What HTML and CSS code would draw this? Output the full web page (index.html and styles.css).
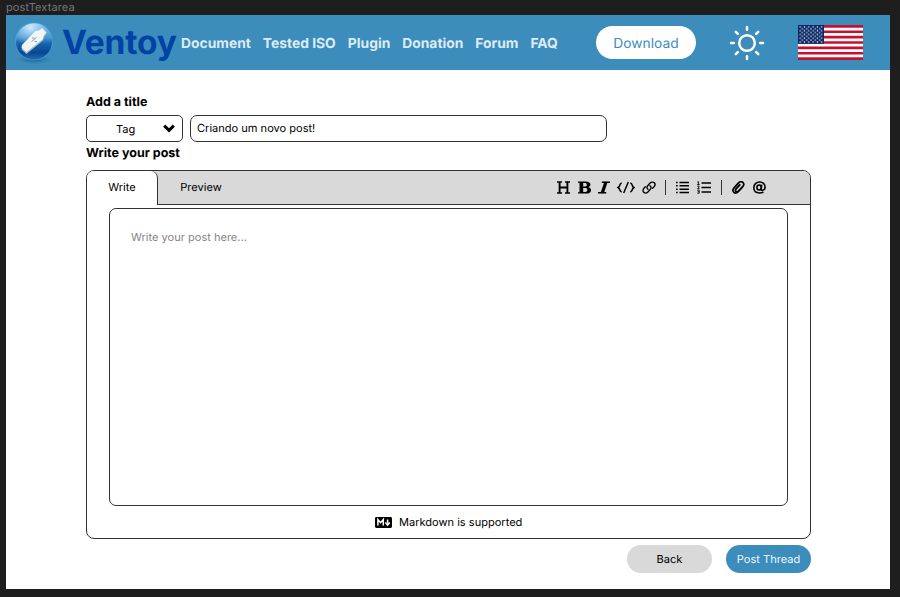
FILE: index.html
```html
<!DOCTYPE html>
<html lang="en">
<head>
<meta charset="utf-8">
<title>postTextarea</title>
<link rel="stylesheet" href="styles.css">
</head>
<body>
<div class="frame-name">postTextarea</div>
<div class="frame">
  <header class="topbar">
    <svg class="logo" viewBox="0 0 40 42">
      <defs>
        <linearGradient id="ball" x1="0" y1="0" x2="0" y2="1"><stop offset="0" stop-color="#8fcbee"/><stop offset=".4" stop-color="#4596d0"/><stop offset=".55" stop-color="#1765b0"/><stop offset=".8" stop-color="#074793"/><stop offset="1" stop-color="#226fb5"/></linearGradient>
        <radialGradient id="gloss" cx=".4" cy=".12" r=".5"><stop offset="0" stop-color="#e2f7ff" stop-opacity=".8"/><stop offset="1" stop-color="#8fcdf0" stop-opacity="0"/></radialGradient>
        <radialGradient id="shade"><stop offset="0" stop-color="#0c4c85" stop-opacity=".9"/><stop offset="1" stop-color="#2f79ab" stop-opacity="0"/></radialGradient>
      </defs>
      <ellipse cx="20" cy="37.500" rx="18" ry="5" fill="url(#shade)"/>
      <circle cx="20" cy="19.5" r="18.5" fill="url(#ball)" stroke="#5da9d6" stroke-width=".6"/>
      <circle cx="20" cy="19.5" r="18" fill="url(#gloss)"/>
      <path d="M7.500 27.500l5 4.500L29 18.500l1-4 2.500-2.500-4.500-5-3 2.500-3.500.5L8 25z" fill="#a9b9c5"/>
      <path d="M7.500 25.500l5 4.500L29 17l1-4 2.500-2.500-4.500-4.500-3 2.500-3.500.5L8 23z" fill="#f3f4f5"/>
      <path d="M17.500 19.500l5-4M18 16h2.500M20.500 19.500h2.500" fill="none" stroke="#7f98a5" stroke-width=".9"/>
    </svg>
    <span class="brand">Ventoy</span>
    <nav class="nav"><a>Document</a><a>Tested ISO</a><a>Plugin</a><a>Donation</a><a>Forum</a><a>FAQ</a></nav>
    <button class="download">Download</button>
    <svg class="sun" viewBox="0 0 36 36" fill="none" stroke="#fff" stroke-width="2.5" stroke-linecap="round"><circle cx="18" cy="18" r="7.800"/><path d="M18 2v2.800M18 31.200V34M2 18h2.800M31.200 18H34M6.800 6.800l2 2M27.200 27.200l2 2M6.800 29.200l2-2M27.200 8.800l2-2"/></svg>
    <svg class="flag" viewBox="0 0 65 35" preserveAspectRatio="none">
      <defs><pattern id="stars" width="4.33" height="3.78" patternUnits="userSpaceOnUse"><circle cx="2.1" cy="1.9" r=".72" fill="#fff"/><circle cx="0" cy="0" r=".72" fill="#fff"/><circle cx="4.33" cy="0" r=".72" fill="#fff"/><circle cx="0" cy="3.78" r=".72" fill="#fff"/><circle cx="4.33" cy="3.78" r=".72" fill="#fff"/></pattern></defs>
      <path fill="#fff" d="M0 0h65v35H0z"/>
      <path stroke="#c8102e" stroke-width="2.692" d="M0 1.350h65M0 6.730h65M0 12.120h65M0 17.500h65M0 22.880h65M0 28.270h65M0 33.650h65"/>
      <path fill="#0a2a66" d="M0 0h26v18.850H0z"/><path fill="url(#stars)" d="M1 1h24v17H1z"/>
    </svg>
  </header>
  <main class="content">
    <h2 class="label">Add a title</h2>
    <div class="title-row">
      <div class="tag"><span>Tag</span><svg viewBox="0 0 12 9"><path d="M1.200 1.600L6 6.400l4.800-4.800" fill="none" stroke="#000" stroke-width="3"/></svg></div>
      <div class="title-input">Criando um novo post!</div>
    </div>
    <h2 class="label second">Write your post</h2>
    <section class="editor">
      <div class="tabs">
        <div class="tab active">Write</div>
        <div class="tab">Preview</div>
        <div class="tools">
          <svg class="t-h" viewBox="0 0 13 13"><path d="M0 1h5M8 1h5M0 12h5M8 12h5" stroke="#000" stroke-width="1.400"/><path d="M2.600 1v11M10.400 1v11M2.600 6.500h7.800" stroke="#000" stroke-width="1.900"/></svg>
          <svg class="t-b" viewBox="0 0 13 13"><path fill="#000" fill-rule="evenodd" d="M0 .4h7.500C11 .4 12.400 1.700 12.400 3.500c0 1.500-.9 2.300-2.200 2.700 1.800.3 2.800 1.300 2.800 3 0 2.200-1.700 3.400-4.800 3.400H0v-1.400h1.500V1.800H0zM5.200 2v3.500h1.600C8.200 5.500 8.800 4.900 8.800 3.700S8.200 2 6.800 2zM5.200 7.100V11H7c1.600 0 2.300-.6 2.300-1.900 0-1.400-.8-2-2.300-2z"/></svg>
          <svg class="t-i" viewBox="0 0 12 13"><path d="M3.800 1.200H12M0 11.800h8.200" stroke="#000" stroke-width="1.500"/><path d="M8 1L4.200 12" stroke="#000" stroke-width="3.200"/></svg>
          <svg class="t-code" viewBox="0 0 18 13"><path d="M4.700 2C1.900 2.600 3.600 5.500 1 6.500c2.600 1 .9 3.900 3.700 4.500M13.300 2c2.800.6 1.100 3.500 3.700 4.500-2.600 1-.9 3.900-3.700 4.500M11.300 1L6.700 12" fill="none" stroke="#000" stroke-width="1.500"/></svg>
          <svg class="t-link" viewBox="0 0 14 13"><g fill="none" stroke="#000" stroke-width="1.350" stroke-linecap="round"><path d="M6 8.300C4 6.500 5.200 5 6.300 3.900l1.800-1.800c1.500-1.500 3.300-1.200 4.200-.3s1 2.700-.3 4L10.600 7.200"/><path d="M8 4.700c2 1.800.8 3.300-.3 4.400L5.900 10.900c-1.500 1.500-3.300 1.200-4.200.3s-1-2.700.3-4L3.400 5.800"/></g></svg>
          <i class="divider"></i>
          <svg class="t-ul" viewBox="0 0 13 13"><path d="M3.500 1.500H13M3.500 4.800H13M3.500 8.200H13M3.500 11.500H13M0 1.500h1.700M0 4.800h1.700M0 8.200h1.700M0 11.500h1.700" stroke="#000" stroke-width="1.600"/></svg>
          <svg class="t-ol" viewBox="0 0 14 13"><path d="M4.500 2H14M4.500 6.500H14M4.500 11H14" stroke="#000" stroke-width="1.500"/><path d="M.4 1l1-.4v3M.2 3.500h2.400M.3 5.200h1.800v1L.5 7.600h2M.3 9.200h1.900v3H.3M.8 10.700h1.400" fill="none" stroke="#000" stroke-width=".9"/></svg>
          <i class="divider"></i>
          <svg class="t-clip" viewBox="0 0 13 13"><path d="M10.800 5.600L6.500 10.400c-1.700 1.900-3.400 2-4.600.9s-1.200-2.900.2-4.500l4-4.500C7.600.7 9.400.2 10.800 1.400s1.300 2.700.1 4L6.700 9.900c-.9 1-1.900 1.200-2.700.5s-.7-1.700.1-2.600l3.700-4" fill="none" stroke="#000" stroke-width="1.750" stroke-linecap="round"/></svg>
          <svg class="t-at" viewBox="0 0 13 13"><g fill="none" stroke="#000" stroke-width="1.600"><ellipse cx="6.100" cy="6.500" rx="2.200" ry="2.500"/><path d="M8.700 3.700L8.200 7.600c-.2 1.600.6 1.800 1.400 1.700 1.500-.2 2.500-1.400 2.500-3.200C12.100 2.900 9.700 1 6.700 1 3.300 1 .8 3.400.8 6.600c0 3.300 2.300 5.400 5.700 5.400 1.600 0 2.900-.4 3.900-1"/></g></svg>
        </div>
      </div>
      <div class="textarea">Write your post here...</div>
      <div class="markdown"><svg viewBox="0 0 17 11"><rect width="17" height="11" rx="1.400"/><path d="M2.900 8.500v-6L5.600 5.700 8.300 2.500v6M12.600 2.400v4M10.400 5.600l2.200 2.600 2.200-2.600" fill="none" stroke="#fff" stroke-width="1.500"/></svg><span>Markdown is supported</span></div>
    </section>
    <div class="actions"><button class="back">Back</button><button class="post">Post Thread</button></div>
  </main>
</div>
</body>
</html>
```
FILE: styles.css
```css
* { box-sizing: border-box; }
body { margin: 0; height: 597px; overflow: hidden; background: #1e1e1e; font-family: Inter, "Liberation Sans", sans-serif; font-size: 11.05px; color: #000; text-rendering: geometricPrecision; }
button { border: 0; padding: 0; font: inherit; text-rendering: inherit; }
svg { display: block; flex: none; }
.frame-name { height: 15px; padding-left: 6px; line-height: 14px; font-size: 11px; letter-spacing: .1px; color: #777; }
.frame { width: 884px; height: 574px; margin-left: 6px; background: #fff; }
.topbar { display: flex; align-items: center; height: 55px; background: #3c8dbc; }
.logo { width: 40px; height: 42px; margin-left: 8px; }
.brand { width: 119px; padding: 2px 0 0 8px; font-size: 33.5px; font-weight: 700; line-height: 53px; letter-spacing: -.2px; color: #0043a5; white-space: nowrap; }
.nav { display: flex; gap: 12px; width: 415px; padding: 2px 0 0 8px; font-size: 13.85px; font-weight: 700; color: #dcebf4; white-space: nowrap; }
.download { width: 100px; height: 33px; margin-left: 8px; padding-top: 2px; border-radius: 17px; background: #fff; color: #3c8dbc; font-size: 13.8px; }
.sun { width: 36px; height: 36px; margin-left: 33px; }
.flag { width: 65px; height: 35px; margin-left: 33px; }
.content { width: 725px; margin-left: 80px; padding-top: 24px; }
.label { margin: 0; height: 21px; line-height: 18px; font-size: 12.5px; font-weight: 700; }
.title-row { display: flex; gap: 7px; height: 27px; }
.tag { display: flex; align-items: center; justify-content: space-between; width: 97px; padding: 0 7px 0 29px; border: 1px solid #333; border-radius: 5px; }
.tag svg { width: 12px; height: 9px; }
.title-input { width: 417px; padding-left: 6px; border: 1px solid #333; border-radius: 7px; line-height: 25px; }
.second { height: 28px; line-height: 24px; }
.editor { height: 369px; border: 1px solid #333; border-radius: 8px; overflow: hidden; }
.tabs { display: flex; height: 34px; background: linear-gradient(#333, #333) 0 100% / 100% 1px no-repeat #d9d9d9; line-height: 33px; }
.tab { width: 86px; text-align: center; }
.active { width: 71px; background: #fff; border-right: 1px solid #333; border-top-right-radius: 7px; }
.tools { display: flex; align-items: center; height: 32px; margin-left: 313px; }
.tools svg { height: 13px; }
.t-h { width: 13px; }
.t-b { width: 13px; margin-left: 8px; }
.t-i { width: 12px; margin-left: 7px; }
.t-code { width: 18px; margin-left: 7px; }
.t-link { width: 14px; margin-left: 7px; }
.divider { width: 1px; height: 15px; margin-left: 9px; background: #333; }
.t-ul { width: 13px; margin-left: 10px; }
.t-ol { width: 14px; margin-left: 8px; }
.t-ol + .divider { margin-left: 10px; }
.t-clip { width: 13px; margin-left: 10px; }
.t-at { width: 13px; margin-left: 8px; }
.textarea { height: 298px; margin: 3px 22px 0; padding: 20px 21px; border: 1px solid #333; border-radius: 7px; line-height: 16px; color: #858585; }
.markdown { display: flex; align-items: center; gap: 7px; height: 32px; padding-left: 288px; }
.markdown svg { width: 17px; height: 11px; }
.actions { display: flex; justify-content: flex-end; gap: 14px; margin-top: 6px; }
.actions button { width: 85px; height: 28px; border-radius: 14px; }
.back { background: #d9d9d9; color: #000; }
.post { background: #3c8dbc; color: #edf6fc; }
```
